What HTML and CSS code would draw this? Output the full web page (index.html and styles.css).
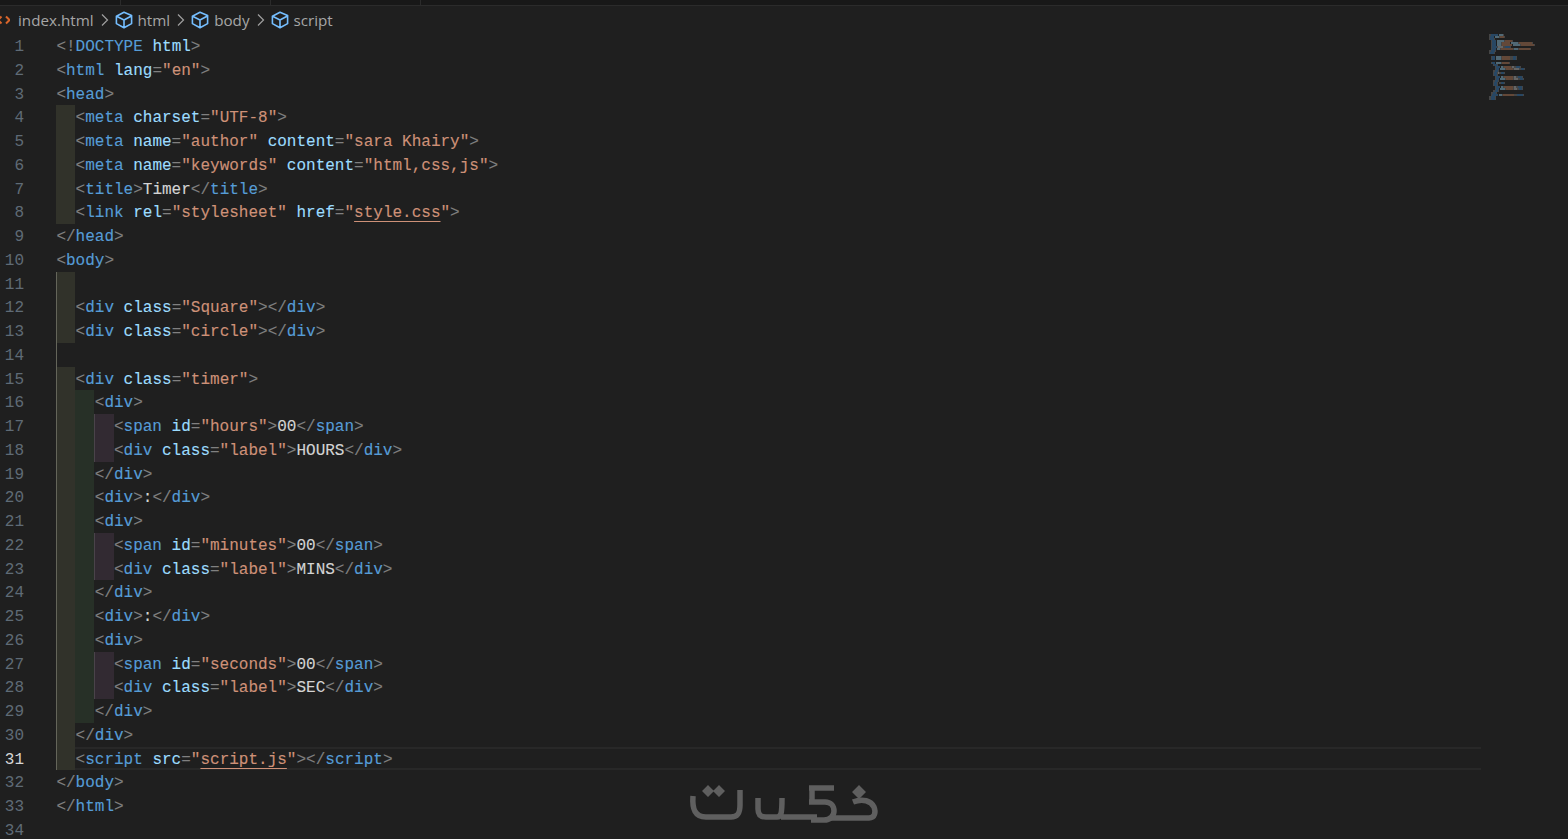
FILE: index.html
```html
<!DOCTYPE html>
<html lang="en">
<head>
<meta charset="UTF-8">
<title>index.html</title>
<link rel="stylesheet" href="styles.css">
</head>
<body>
<div class="tabs"><div class="tab first"></div><div class="tab"></div><div class="tab"></div><div class="tab rest"></div></div>
<nav class="crumbs">
  <svg class="file-icon" width="10" height="14" viewBox="0 0 10 14"><path d="M1.5 3.5 L-2 7 L1.5 10.5 M6 3.5 L9.5 7 L6 10.5" fill="none" stroke="#d9652b" stroke-width="2"/></svg>
  <span class="crumb first-crumb">index.html</span>
  <svg class="chev" width="8" height="14" viewBox="0 0 8 14"><path d="M1 1.5 L6.5 7 L1 12.5" fill="none" stroke="#a0a0a0" stroke-width="1.2"/></svg>
  <svg class="cube" width="18" height="18" viewBox="0 0 18 18"><path d="M9 1.2 L16.6 4.6 V12.6 L9 16.8 L1.4 12.6 V5.2 Z M1.6 5.2 L9 9 L16.4 5 M9 9 V16.6" fill="none" stroke="#75beff" stroke-width="1.6" stroke-linejoin="round"/></svg>
  <span class="crumb">html</span>
  <svg class="chev" width="8" height="14" viewBox="0 0 8 14"><path d="M1 1.5 L6.5 7 L1 12.5" fill="none" stroke="#a0a0a0" stroke-width="1.2"/></svg>
  <svg class="cube" width="18" height="18" viewBox="0 0 18 18"><path d="M9 1.2 L16.6 4.6 V12.6 L9 16.8 L1.4 12.6 V5.2 Z M1.6 5.2 L9 9 L16.4 5 M9 9 V16.6" fill="none" stroke="#75beff" stroke-width="1.6" stroke-linejoin="round"/></svg>
  <span class="crumb">body</span>
  <svg class="chev" width="8" height="14" viewBox="0 0 8 14"><path d="M1 1.5 L6.5 7 L1 12.5" fill="none" stroke="#a0a0a0" stroke-width="1.2"/></svg>
  <svg class="cube" width="18" height="18" viewBox="0 0 18 18"><path d="M9 1.2 L16.6 4.6 V12.6 L9 16.8 L1.4 12.6 V5.2 Z M1.6 5.2 L9 9 L16.4 5 M9 9 V16.6" fill="none" stroke="#75beff" stroke-width="1.6" stroke-linejoin="round"/></svg>
  <span class="crumb">script</span>
</nav>
<main class="editor">
<div class="code">
<div class="line"><span class="num">1</span><div class="src"><span class="txt"><b class="p">&lt;!</b><b class="t">DOCTYPE</b> <b class="a">html</b><b class="p">&gt;</b></span></div></div>
<div class="line"><span class="num">2</span><div class="src"><span class="txt"><b class="p">&lt;</b><b class="t">html</b> <b class="a">lang</b><b class="p">=</b><b class="s">"en"</b><b class="p">&gt;</b></span></div></div>
<div class="line"><span class="num">3</span><div class="src"><span class="txt"><b class="p">&lt;</b><b class="t">head</b><b class="p">&gt;</b></span></div></div>
<div class="line"><span class="num">4</span><div class="src"><i class="ind l1"></i><span class="txt"><b class="p">&lt;</b><b class="t">meta</b> <b class="a">charset</b><b class="p">=</b><b class="s">"UTF-8"</b><b class="p">&gt;</b></span></div></div>
<div class="line"><span class="num">5</span><div class="src"><i class="ind l1"></i><span class="txt"><b class="p">&lt;</b><b class="t">meta</b> <b class="a">name</b><b class="p">=</b><b class="s">"author"</b> <b class="a">content</b><b class="p">=</b><b class="s">"sara Khairy"</b><b class="p">&gt;</b></span></div></div>
<div class="line"><span class="num">6</span><div class="src"><i class="ind l1"></i><span class="txt"><b class="p">&lt;</b><b class="t">meta</b> <b class="a">name</b><b class="p">=</b><b class="s">"keywords"</b> <b class="a">content</b><b class="p">=</b><b class="s">"html,css,js"</b><b class="p">&gt;</b></span></div></div>
<div class="line"><span class="num">7</span><div class="src"><i class="ind l1"></i><span class="txt"><b class="p">&lt;</b><b class="t">title</b><b class="p">&gt;</b><b class="x">Timer</b><b class="p">&lt;/</b><b class="t">title</b><b class="p">&gt;</b></span></div></div>
<div class="line"><span class="num">8</span><div class="src"><i class="ind l1"></i><span class="txt"><b class="p">&lt;</b><b class="t">link</b> <b class="a">rel</b><b class="p">=</b><b class="s">"stylesheet"</b> <b class="a">href</b><b class="p">=</b><b class="s">"<u>style.css</u>"</b><b class="p">&gt;</b></span></div></div>
<div class="line"><span class="num">9</span><div class="src"><span class="txt"><b class="p">&lt;/</b><b class="t">head</b><b class="p">&gt;</b></span></div></div>
<div class="line"><span class="num">10</span><div class="src"><span class="txt"><b class="p">&lt;</b><b class="t">body</b><b class="p">&gt;</b></span></div></div>
<div class="line"><span class="num">11</span><div class="src"><i class="ind l1 edge"></i></div></div>
<div class="line"><span class="num">12</span><div class="src"><i class="ind l1 edge"></i><span class="txt"><b class="p">&lt;</b><b class="t">div</b> <b class="a">class</b><b class="p">=</b><b class="s">"Square"</b><b class="p">&gt;&lt;/</b><b class="t">div</b><b class="p">&gt;</b></span></div></div>
<div class="line"><span class="num">13</span><div class="src"><i class="ind l1 edge"></i><span class="txt"><b class="p">&lt;</b><b class="t">div</b> <b class="a">class</b><b class="p">=</b><b class="s">"circle"</b><b class="p">&gt;&lt;/</b><b class="t">div</b><b class="p">&gt;</b></span></div></div>
<div class="line"><span class="num">14</span><div class="src"><i class="ind guide"></i></div></div>
<div class="line"><span class="num">15</span><div class="src"><i class="ind l1 edge"></i><span class="txt"><b class="p">&lt;</b><b class="t">div</b> <b class="a">class</b><b class="p">=</b><b class="s">"timer"</b><b class="p">&gt;</b></span></div></div>
<div class="line"><span class="num">16</span><div class="src"><i class="ind l1 edge"></i><i class="ind l2"></i><span class="txt"><b class="p">&lt;</b><b class="t">div</b><b class="p">&gt;</b></span></div></div>
<div class="line"><span class="num">17</span><div class="src"><i class="ind l1 edge"></i><i class="ind l2"></i><i class="ind l3"></i><span class="txt"><b class="p">&lt;</b><b class="t">span</b> <b class="a">id</b><b class="p">=</b><b class="s">"hours"</b><b class="p">&gt;</b><b class="x">00</b><b class="p">&lt;/</b><b class="t">span</b><b class="p">&gt;</b></span></div></div>
<div class="line"><span class="num">18</span><div class="src"><i class="ind l1 edge"></i><i class="ind l2"></i><i class="ind l3"></i><span class="txt"><b class="p">&lt;</b><b class="t">div</b> <b class="a">class</b><b class="p">=</b><b class="s">"label"</b><b class="p">&gt;</b><b class="x">HOURS</b><b class="p">&lt;/</b><b class="t">div</b><b class="p">&gt;</b></span></div></div>
<div class="line"><span class="num">19</span><div class="src"><i class="ind l1 edge"></i><i class="ind l2"></i><span class="txt"><b class="p">&lt;/</b><b class="t">div</b><b class="p">&gt;</b></span></div></div>
<div class="line"><span class="num">20</span><div class="src"><i class="ind l1 edge"></i><i class="ind l2"></i><span class="txt"><b class="p">&lt;</b><b class="t">div</b><b class="p">&gt;</b><b class="x">:</b><b class="p">&lt;/</b><b class="t">div</b><b class="p">&gt;</b></span></div></div>
<div class="line"><span class="num">21</span><div class="src"><i class="ind l1 edge"></i><i class="ind l2"></i><span class="txt"><b class="p">&lt;</b><b class="t">div</b><b class="p">&gt;</b></span></div></div>
<div class="line"><span class="num">22</span><div class="src"><i class="ind l1 edge"></i><i class="ind l2"></i><i class="ind l3"></i><span class="txt"><b class="p">&lt;</b><b class="t">span</b> <b class="a">id</b><b class="p">=</b><b class="s">"minutes"</b><b class="p">&gt;</b><b class="x">00</b><b class="p">&lt;/</b><b class="t">span</b><b class="p">&gt;</b></span></div></div>
<div class="line"><span class="num">23</span><div class="src"><i class="ind l1 edge"></i><i class="ind l2"></i><i class="ind l3"></i><span class="txt"><b class="p">&lt;</b><b class="t">div</b> <b class="a">class</b><b class="p">=</b><b class="s">"label"</b><b class="p">&gt;</b><b class="x">MINS</b><b class="p">&lt;/</b><b class="t">div</b><b class="p">&gt;</b></span></div></div>
<div class="line"><span class="num">24</span><div class="src"><i class="ind l1 edge"></i><i class="ind l2"></i><span class="txt"><b class="p">&lt;/</b><b class="t">div</b><b class="p">&gt;</b></span></div></div>
<div class="line"><span class="num">25</span><div class="src"><i class="ind l1 edge"></i><i class="ind l2"></i><span class="txt"><b class="p">&lt;</b><b class="t">div</b><b class="p">&gt;</b><b class="x">:</b><b class="p">&lt;/</b><b class="t">div</b><b class="p">&gt;</b></span></div></div>
<div class="line"><span class="num">26</span><div class="src"><i class="ind l1 edge"></i><i class="ind l2"></i><span class="txt"><b class="p">&lt;</b><b class="t">div</b><b class="p">&gt;</b></span></div></div>
<div class="line"><span class="num">27</span><div class="src"><i class="ind l1 edge"></i><i class="ind l2"></i><i class="ind l3"></i><span class="txt"><b class="p">&lt;</b><b class="t">span</b> <b class="a">id</b><b class="p">=</b><b class="s">"seconds"</b><b class="p">&gt;</b><b class="x">00</b><b class="p">&lt;/</b><b class="t">span</b><b class="p">&gt;</b></span></div></div>
<div class="line"><span class="num">28</span><div class="src"><i class="ind l1 edge"></i><i class="ind l2"></i><i class="ind l3"></i><span class="txt"><b class="p">&lt;</b><b class="t">div</b> <b class="a">class</b><b class="p">=</b><b class="s">"label"</b><b class="p">&gt;</b><b class="x">SEC</b><b class="p">&lt;/</b><b class="t">div</b><b class="p">&gt;</b></span></div></div>
<div class="line"><span class="num">29</span><div class="src"><i class="ind l1 edge"></i><i class="ind l2"></i><span class="txt"><b class="p">&lt;/</b><b class="t">div</b><b class="p">&gt;</b></span></div></div>
<div class="line"><span class="num">30</span><div class="src"><i class="ind l1 edge"></i><span class="txt"><b class="p">&lt;/</b><b class="t">div</b><b class="p">&gt;</b></span></div></div>
<div class="line current"><span class="num">31</span><div class="src"><i class="ind l1 edge"></i><span class="txt"><b class="p">&lt;</b><b class="t">script</b> <b class="a">src</b><b class="p">=</b><b class="s">"<u>script.js</u>"</b><b class="p">&gt;&lt;/</b><b class="t">script</b><b class="p">&gt;</b></span></div></div>
<div class="line"><span class="num">32</span><div class="src"><span class="txt"><b class="p">&lt;/</b><b class="t">body</b><b class="p">&gt;</b></span></div></div>
<div class="line"><span class="num">33</span><div class="src"><span class="txt"><b class="p">&lt;/</b><b class="t">html</b><b class="p">&gt;</b></span></div></div>
<div class="line"><span class="num">34</span><div class="src"></div></div>
</div>
<aside class="minimap">
<svg class="mini" width="60" height="68" viewBox="0 0 60 68" fill="none" stroke-width="1.5">
<path stroke="#5c5c5c" d="M0 1h2M14 1h1M0 3h1M10 3h1M15 3h1M0 5h1M5 5h1M2 7h1M15 7h1M23 7h1M2 9h1M12 9h1M29 9h1M43 9h1M2 11h1M12 11h1M31 11h1M45 11h1M2 13h1M8 13h1M14 13h2M21 13h1M2 15h1M11 15h1M24 15h1M29 15h1M41 15h1M0 17h2M6 17h1M0 19h1M5 19h1M2 23h1M12 23h1M21 23h3M27 23h1M2 25h1M12 25h1M21 25h3M27 25h1M2 29h1M12 29h1M20 29h1M4 31h1M8 31h1M6 33h1M14 33h1M22 33h1M25 33h2M31 33h1M6 35h1M16 35h1M24 35h1M30 35h2M35 35h1M4 37h2M9 37h1M4 39h1M8 39h1M10 39h2M15 39h1M4 41h1M8 41h1M6 43h1M14 43h1M24 43h1M27 43h2M33 43h1M6 45h1M16 45h1M24 45h1M29 45h2M34 45h1M4 47h2M9 47h1M4 49h1M8 49h1M10 49h2M15 49h1M4 51h1M8 51h1M6 53h1M14 53h1M24 53h1M27 53h2M33 53h1M6 55h1M16 55h1M24 55h1M28 55h2M33 55h1M4 57h2M9 57h1M2 59h2M7 59h1M2 61h1M13 61h1M25 61h3M34 61h1M0 63h2M6 63h1M0 65h2M6 65h1"/>
<path stroke="#2f5f8a" d="M2 1h7M1 3h4M1 5h4M3 7h4M3 9h4M3 11h4M3 13h5M16 13h5M3 15h4M2 17h4M1 19h4M3 23h3M24 23h3M3 25h3M24 25h3M3 29h3M5 31h3M7 33h4M27 33h4M7 35h3M32 35h3M6 37h3M5 39h3M12 39h3M5 41h3M7 43h4M29 43h4M7 45h3M31 45h3M6 47h3M5 49h3M12 49h3M5 51h3M7 53h4M29 53h4M7 55h3M30 55h3M6 57h3M4 59h3M3 61h6M28 61h6M2 63h4M2 65h4"/>
<path stroke="#6f95a8" d="M10 1h4M6 3h4M8 7h7M8 9h4M22 9h7M8 11h4M24 11h7M8 15h3M25 15h4M7 23h5M7 25h5M7 29h5M12 33h2M11 35h5M12 43h2M11 45h5M12 53h2M11 55h5M10 61h3"/>
<path stroke="#8a6248" d="M11 3h4M16 7h7M13 9h8M30 9h13M13 11h10M32 11h13M12 15h12M30 15h11M13 23h8M13 25h8M13 29h7M15 33h7M17 35h7M15 43h9M17 45h7M15 53h9M17 55h7M14 61h11"/>
<path stroke="#8f8f8f" d="M9 13h5M23 33h2M25 35h5M9 39h1M25 43h2M25 45h4M25 53h2M25 55h3"/>
</svg>
</aside>
</main>
<svg class="watermark" width="190" height="40" viewBox="0 0 190 40" fill="none" stroke="#5f5f5f" stroke-width="5.5">
<path d="M4 11 C3 24 6 32 17 32 H42 C49 32 51 28 51 20 V5"/>
<path d="M69 13 V24 C69 29 71 32 77 32 H88 C92 32 93 29 93 13 M92 32 H128"/>
<path d="M120 3 H145 M123 3 V17 M120 17 H136 C142 17 145 21 145 26 C145 31 141 35 135 35 H122"/>
<path d="M141 33 H180 C186 33 187 27 185 22 C182 16 174 13 164 17"/>
<path fill="#5f5f5f" stroke="none" d="M19 0l6 6-6 6-6-6zM30 0l6 6-6 6-6-6zM170 0l7 7-7 7-7-7z"/>
</svg>
</body>
</html>
```
FILE: styles.css
```css
* { box-sizing: border-box; }
html, body { margin: 0; height: 100%; }
body {
  position: relative;
  height: 839px;
  overflow: hidden;
  background: #1f1f1f;
  color: #d4d4d4;
  font-family: "Liberation Mono", monospace;
}
.tabs {
  display: flex;
  height: 6px;
  background: #181818;
  border-bottom: 1px solid #2b2b2b;
}
.tab { width: 150px; border-right: 1px solid #2b2b2b; }
.tab.first { width: 121px; }
.tab.rest { flex: 1; border-right: 0; }

.crumbs {
  display: flex;
  align-items: center;
  height: 28px;
  font-family: "Open Sans", sans-serif;
  font-size: 15.2px;
  color: #a6a6a6;
}
.file-icon { flex: none; margin-right: 8px; }
.chev { flex: none; margin: 0 6px 0 7px; }
.cube { flex: none; margin-right: 5px; }

.editor { display: flex; }
.code { width: 1481px; flex: none; }
.minimap { flex: 1; padding: 0 0 0 8px; }
.mini { display: block; opacity: .85; }

.line {
  display: flex;
  height: 23.75px;
  line-height: 26.5px;
  font-size: 16px;
  white-space: pre;
}
.num {
  flex: none;
  width: 24px;
  margin-right: 32px;
  text-align: right;
  color: #5f6b76;
}
.src { flex: 1; display: flex; min-width: 0; }
.current .src { box-shadow: inset 0 2px #282828, inset 0 -2px #282828; }
.current .num { color: #d6d6d6; }

.ind { flex: none; width: 19.2px; display: block; }
.l1 { background: #31322a; }
.l1.edge { border-left: 1px solid #64655a; }
.l2 { background: #273027; }
.l3 { background: #322a32; border-left: 1px solid #4a434a; }
.guide { border-left: 1px solid #64655a; }

.txt { margin-left: .4px; -webkit-text-stroke: .12px; }
.txt b { font-weight: 400; }
.p { color: #808080; }
.t { color: #569cd6; }
.a { color: #9cdcfe; }
.s { color: #ce9178; }
.x { color: #d4d4d4; }
u { text-decoration: underline; text-decoration-thickness: 1px; text-underline-offset: 4px; }

.watermark { position: absolute; left: 689px; top: 785px; }
```
